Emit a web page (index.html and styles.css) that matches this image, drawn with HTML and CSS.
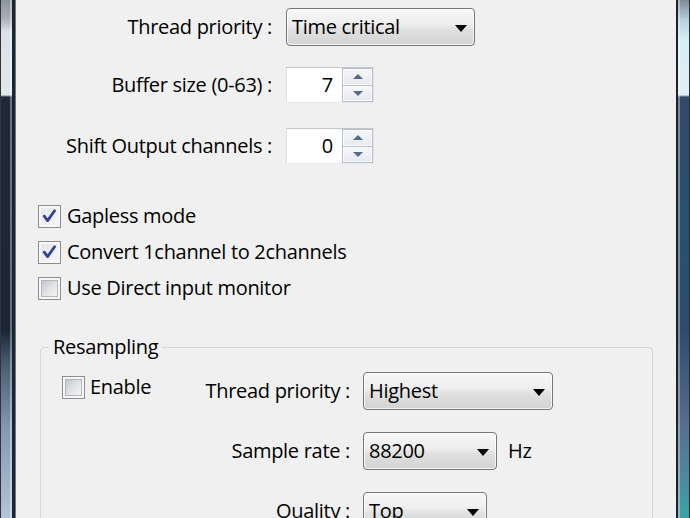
FILE: index.html
```html
<!DOCTYPE html>
<html lang="en">
<head>
<meta charset="utf-8">
<title>Output settings</title>
<link rel="stylesheet" href="styles.css">
</head>
<body>
<div class="window">
  <div class="frame frame-left"></div>
  <main class="client">
    <div class="form">
      <div class="row r1">
        <span class="label">Thread priority :</span>
        <div class="combo w-tc"><span>Time critical</span><i class="arrow"></i></div>
      </div>
      <div class="row r2">
        <span class="label">Buffer size (0-63) :</span>
        <div class="spin">
          <span class="val">7</span>
          <div class="spin-btns"><div class="sb up"><i></i></div><div class="sb down"><i></i></div></div>
        </div>
      </div>
      <div class="row r3">
        <span class="label">Shift Output channels :</span>
        <div class="spin">
          <span class="val">0</span>
          <div class="spin-btns"><div class="sb up"><i></i></div><div class="sb down"><i></i></div></div>
        </div>
      </div>
    </div>

    <div class="checks">
      <div class="check"><span class="box checked"><span class="in"><svg viewBox="0 0 17 17" width="17" height="17"><path d="M3.2 8.2 L6.6 12.6 L13.6 2.8" fill="none" stroke="#34448a" stroke-width="2.8" stroke-linejoin="round" stroke-linecap="round"/></svg></span></span><span>Gapless mode</span></div>
      <div class="check"><span class="box checked"><span class="in"><svg viewBox="0 0 17 17" width="17" height="17"><path d="M3.2 8.2 L6.6 12.6 L13.6 2.8" fill="none" stroke="#34448a" stroke-width="2.8" stroke-linejoin="round" stroke-linecap="round"/></svg></span></span><span>Convert 1channel to 2channels</span></div>
      <div class="check"><span class="box"><span class="in"></span></span><span>Use Direct input monitor</span></div>
    </div>

    <fieldset class="group">
      <legend>Resampling</legend>
      <div class="ggrid">
        <div class="check enable"><span class="box"><span class="in"></span></span><span>Enable</span></div>
        <span class="label">Thread priority :</span>
        <div class="combo w-hi"><span>Highest</span><i class="arrow"></i></div>
        <span class="label c2">Sample rate :</span>
        <div class="unit-wrap"><div class="combo w-sr"><span>88200</span><i class="arrow"></i></div><span>Hz</span></div>
        <span class="label c2">Quality :</span>
        <div class="combo w-q"><span>Top</span><i class="arrow"></i></div>
      </div>
    </fieldset>
  </main>
  <div class="frame frame-right"></div>
</div>
</body>
</html>
```

FILE: styles.css
```css
html, body {
  margin: 0;
  padding: 0;
}
body {
  width: 690px;
  height: 518px;
  overflow: hidden;
  font-family: "Open Sans", "Noto Sans", sans-serif;
  font-size: 20px;
  line-height: 24px;
  letter-spacing: -0.3px;
  color: #000;
  background: #f0f0f0;
}
.window {
  display: flex;
  height: 518px;
}
.frame {
  flex: none;
  height: 518px;
}
.frame-left {
  width: 16px;
  background:
    linear-gradient(to right, #30343a 0 1px, transparent 1px 10px, rgba(255,255,255,0.35) 10px 12px, #1c2430 12px 15px, #6e7782 15px 16px),
    linear-gradient(to bottom, #8c949c 0, #a9b0b8 18px, #dde1e7 32px, #e3e6eb 95px, #1f2b3b 97px, #1a2636 330px, #48596f 362px, #8799b2 430px, #b3c3d9 518px);
}
.frame-right {
  width: 14px;
  background:
    linear-gradient(to right, #1a232c 0 2px, rgba(255,255,255,0.35) 2px 4px, transparent 4px 13px, #22303a 13px 14px),
    linear-gradient(to bottom, #7d8892 0, #b4d2de 20px, #d6eef5 40px, #e0eff4 95px, #34496a 97px, #285170 220px, #2e4c6e 330px, #566c8e 420px, #4d8aa0 480px, #3ca3a6 518px);
}
.client {
  flex: 1;
  min-width: 0;
  padding-top: 8px;
  background: #f0f0f0;
}

/* top form */
.row {
  display: flex;
  align-items: center;
  gap: 14px;
}
.row .label {
  flex: none;
  width: 256px;
  text-align: right;
}
.r1 { height: 38px; }
.r2 { height: 36px; margin-top: 21px; }
.r3 { height: 36px; margin-top: 25px; }

/* combobox */
.combo {
  box-sizing: border-box;
  height: 38px;
  display: flex;
  align-items: center;
  justify-content: space-between;
  padding: 0 7px 0 5px;
  border: 1px solid #767676;
  border-radius: 4px;
  background: linear-gradient(#f8f8f8 0%, #eeeeee 42%, #e0e0e0 58%, #d3d3d3 100%);
  box-shadow: inset 0 0 0 1px rgba(255,255,255,0.75);
}
.w-tc { width: 189px; }
.w-hi { width: 190px; }
.w-sr { width: 134px; }
.w-q  { width: 124px; }
.arrow {
  flex: none;
  width: 0;
  height: 0;
  border-left: 6px solid transparent;
  border-right: 6px solid transparent;
  border-top: 7px solid #000;
  margin-top: 2px;
}

/* spinner */
.spin {
  box-sizing: border-box;
  width: 88px;
  height: 36px;
  display: flex;
  background: #fff;
  border: 1px solid;
  border-color: #c2c5ca #e1e4e9 #e6e9ee #dfe2e7;
}
.val {
  flex: 1;
  text-align: right;
  padding-right: 9px;
  align-self: center;
}
.spin-btns {
  flex: none;
  width: 31px;
  display: flex;
  flex-direction: column;
}
.sb {
  flex: 1;
  box-sizing: border-box;
  display: flex;
  align-items: center;
  justify-content: center;
  border: 1px solid #b8bec7;
  background: linear-gradient(#f6f7f9, #e6e9ee);
  box-shadow: inset 0 0 0 1px #fbfcfd;
}
.sb + .sb { border-top: none; }
.sb i {
  width: 0;
  height: 0;
  border-left: 5px solid transparent;
  border-right: 5px solid transparent;
}
.up i { border-bottom: 5px solid #55698f; }
.down i { border-top: 5px solid #55698f; }

/* checkboxes */
.checks {
  margin-top: 34px;
  padding-left: 22px;
}
.check {
  display: flex;
  align-items: center;
  gap: 6px;
  height: 36px;
}
.box {
  flex: none;
  box-sizing: border-box;
  width: 23px;
  height: 23px;
  padding: 2px;
  border: 1px solid #8c8d8f;
  background: #f7f7f7;
}
.box .in {
  box-sizing: border-box;
  display: block;
  width: 17px;
  height: 17px;
  border: 1px solid #b3b7bd;
  background: linear-gradient(135deg, #c6c9cd 0%, #e2e4e6 55%, #f4f4f4 100%);
}
.box.checked .in {
  border: none;
  background: linear-gradient(135deg, #e4e6ea, #f7f7f9);
}
.box svg { display: block; }

/* resampling group */
.group {
  margin: 29px 23px 0 24px;
  padding: 13px 0 0 8px;
  border: 1px solid #d2d5d9;
  border-radius: 4px;
  min-width: 0;
}
.group legend {
  padding: 0 4px;
  line-height: 24px;
}
.ggrid {
  margin-left: 13px;
  display: grid;
  grid-template-columns: 120px 155px auto;
  grid-auto-rows: 38px;
  column-gap: 13px;
  row-gap: 22px;
  align-items: center;
}
.ggrid .label {
  text-align: right;
}
.ggrid .c2 { grid-column: 2; }
.ggrid .combo, .ggrid .unit-wrap { justify-self: start; }
.check.enable {
  height: 24px;
  align-self: start;
  margin-top: 3px;
  gap: 5px;
}
.unit-wrap {
  display: flex;
  align-items: center;
  gap: 11px;
}
```
